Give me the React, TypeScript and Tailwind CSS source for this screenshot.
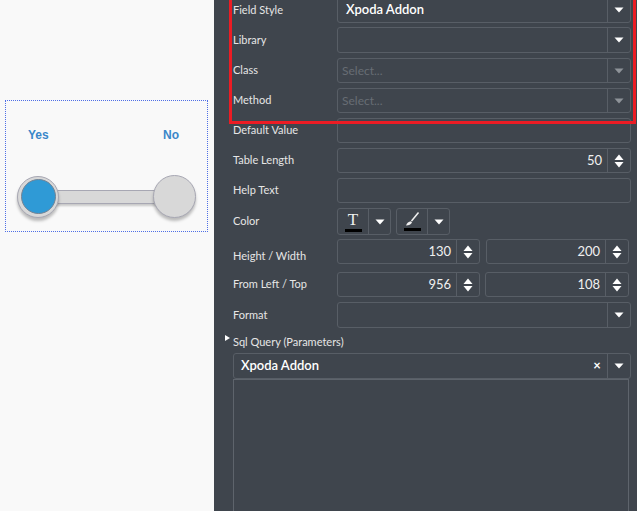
import React from "react";

const font = { fontFamily: "Lato, 'Open Sans', sans-serif" };

function Arrow({ dim }: { dim?: boolean }) {
  return (
    <svg width="10" height="6" viewBox="0 0 10 6">
      <path d="M0.5 0.5 L9.5 0.5 L5 5.5 Z" fill={dim ? "#8e9399" : "#ffffff"} />
    </svg>
  );
}

function Spin() {
  return (
    <svg width="10" height="14" viewBox="0 0 10 14">
      <path d="M5 0.5 L9.5 6 L0.5 6 Z" fill="#ffffff" />
      <path d="M0.5 8 L9.5 8 L5 13.5 Z" fill="#ffffff" />
    </svg>
  );
}

function Select({ text, placeholder, dim }: { text?: string; placeholder?: string; dim?: boolean }) {
  return (
    <div className="flex h-full w-full rounded-[3px] border border-[#585e66]">
      <div className="flex flex-1 items-center px-[4px]">
        {text && <span className="pl-[4px] text-[13px] font-semibold text-white">{text}</span>}
        {placeholder && <span className="text-[12px] text-[#676d74]">{placeholder}</span>}
      </div>
      <div className="flex w-[23px] items-center justify-center border-l border-[#585e66]">
        <Arrow dim={dim} />
      </div>
    </div>
  );
}

function Input() {
  return <div className="h-full w-full rounded-[3px] border border-[#585e66]" />;
}

function NumberBox({ value }: { value: string }) {
  return (
    <div className="flex h-full w-full rounded-[3px] border border-[#585e66]">
      <div className="flex flex-1 items-center justify-end pr-[5px] text-[13px] text-[#f0f0f0]">{value}</div>
      <div className="flex w-[23px] items-center justify-center border-l border-[#585e66]">
        <Spin />
      </div>
    </div>
  );
}

function Row({ label, h = 26, mt = 4, lpt = 0, children }: { label: string; h?: number; mt?: number; lpt?: number; children: React.ReactNode }) {
  return (
    <div className="flex items-center" style={{ height: h, marginTop: mt }}>
      <div className="w-[104px] text-[11px] text-[#e6e6e6]" style={{ paddingTop: lpt }}>
        {label}
      </div>
      <div className="flex h-full flex-1">{children}</div>
    </div>
  );
}

function ColorBtn({ kind }: { kind: "text" | "brush" }) {
  return (
    <div className="flex h-[27px] w-[54px] rounded-[3px] border border-[#585e66]">
      <div className="flex w-[30px] flex-col items-center justify-center">
        {kind === "text" ? (
          <span className="text-[17px] leading-[16px] text-[#f0f0f0]" style={{ fontFamily: "'Liberation Serif', serif" }}>
            T
          </span>
        ) : (
          <svg width="16" height="15" viewBox="0 0 16 15">
            <path d="M14.5 0.5 L7.5 9" stroke="#f0f0f0" strokeWidth="1.5" />
            <path d="M2 13.5 C3 11 4.5 9.5 7 9.2 L8 10.5 C7 12.5 5 13.5 2 13.5 Z" fill="#f0f0f0" />
          </svg>
        )}
        <div className="mt-[1px] h-[3px] w-[17px] bg-black" />
      </div>
      <div className="flex flex-1 items-center justify-center border-l border-[#585e66]">
        <Arrow />
      </div>
    </div>
  );
}

export default function App() {
  return (
    <div className="flex h-[511px] w-[637px] overflow-hidden" style={font}>
      <div className="w-[214px] shrink-0 bg-[#f9f9f9]">
        <div className="ml-[5px] mt-[100px] h-[132px] w-[203px] border border-dotted border-[#4f6fe6]">
          <div className="flex justify-between pl-[22px] pr-[28px] pt-[25px] text-[12px] font-bold text-[#3a87c9]" style={{ fontFamily: "'Liberation Sans', Arial, sans-serif" }}>
            <span>Yes</span>
            <span>No</span>
          </div>
          <div className="ml-[11px] mt-[31px] flex items-center">
            <div className="relative z-10 flex h-[42px] w-[42px] items-center justify-center rounded-full border border-[#a7a7b3] bg-[#d8d8d8] shadow-[0_3px_3px_rgba(0,0,0,0.25)]">
              <div className="h-[35px] w-[35px] rounded-full border border-[#738395] bg-[#2f9ad6]" />
            </div>
            <div className="-mx-[4px] h-[14px] w-[102px] border-y border-[#a7a7b3] bg-[#d8d8d8] shadow-[0_2px_2px_rgba(0,0,0,0.2)]" />
            <div className="relative z-10 h-[43px] w-[43px] rounded-full border border-[#a7a7b3] bg-[#d8d8d8] shadow-[0_3px_3px_rgba(0,0,0,0.25)]" />
          </div>
        </div>
      </div>

      <div className="relative flex-1 bg-[#3f454d]">
        <div className="absolute left-[15px] top-[-3px] h-[127px] w-[407px] border-[3px] border-[#ec1c24]" />

        <div className="flex flex-col pl-[19px] pr-[6px]">
          <Row label="Field Style" mt={-3} lpt={0}>
            <Select text="Xpoda Addon" />
          </Row>
          <Row label="Library">
            <Select />
          </Row>
          <Row label="Class" mt={5} h={25}>
            <Select placeholder="Select..." dim />
          </Row>
          <Row label="Method" mt={5} h={25}>
            <Select placeholder="Select..." dim />
          </Row>
          <Row label="Default Value" mt={5} h={25}>
            <Input />
          </Row>
          <Row label="Table Length" mt={5} h={25}>
            <NumberBox value="50" />
          </Row>
          <Row label="Help Text" mt={5} h={25}>
            <Input />
          </Row>
          <Row label="Color" mt={5} h={27}>
            <div className="flex items-center gap-[5px]">
              <ColorBtn kind="text" />
              <ColorBtn kind="brush" />
            </div>
          </Row>
          <Row label="Height / Width" mt={4} h={25} lpt={9}>
            <div className="flex h-full w-full gap-[6px] pr-[2px]">
              <div className="h-full w-[143px]">
                <NumberBox value="130" />
              </div>
              <div className="h-full flex-1">
                <NumberBox value="200" />
              </div>
            </div>
          </Row>
          <Row label="From Left / Top" mt={8} h={25}>
            <div className="flex h-full w-full gap-[5px] pr-[2px]">
              <div className="h-full w-[143px]">
                <NumberBox value="956" />
              </div>
              <div className="h-full flex-1">
                <NumberBox value="108" />
              </div>
            </div>
          </Row>
          <Row label="Format" mt={5} h={26}>
            <Select />
          </Row>

          <div className="relative mt-[6px] text-[11px] text-[#e6e6e6]">
            <svg className="absolute left-[-8px] top-[1px]" width="5" height="6" viewBox="0 0 5 6">
              <path d="M0 0 L5 3 L0 6 Z" fill="#ffffff" />
            </svg>
            Sql Query (Parameters)
          </div>
          <div className="mt-[2px] h-[26px]">
            <div className="flex h-full w-full rounded-[3px] border border-[#585e66]">
              <div className="flex flex-1 items-center px-[7px]">
                <span className="text-[13px] font-semibold text-white">Xpoda Addon</span>
              </div>
              <div className="flex w-[12px] items-center justify-center text-[13px] font-bold text-white">×</div>
              <div className="ml-[4px] flex w-[23px] items-center justify-center border-l border-[#585e66]">
                <Arrow />
              </div>
            </div>
          </div>
          <div className="h-[200px] w-[396px] border border-[#5e646c]" />
        </div>
      </div>
    </div>
  );
}
